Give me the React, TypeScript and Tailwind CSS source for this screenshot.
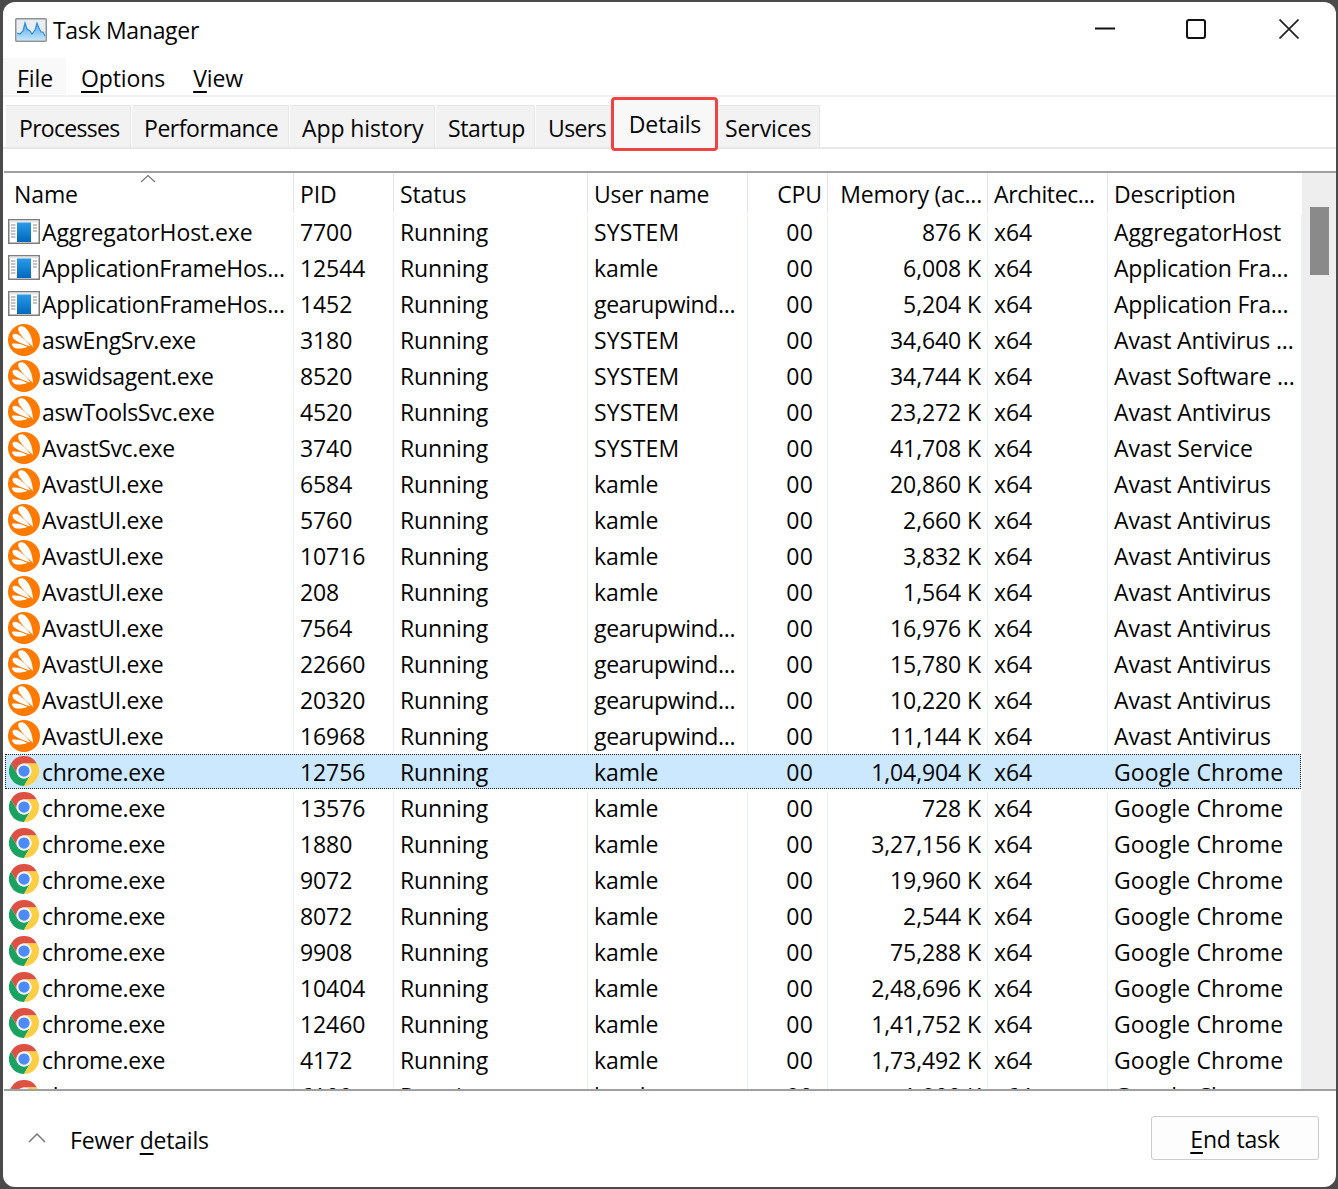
const rows: string[][] = [
["app","AggregatorHost.exe","7700","SYSTEM","876 K","AggregatorHost"],
["app","ApplicationFrameHos...","12544","kamle","6,008 K","Application Fra..."],
["app","ApplicationFrameHos...","1452","gearupwind...","5,204 K","Application Fra..."],
["avast","aswEngSrv.exe","3180","SYSTEM","34,640 K","Avast Antivirus ..."],
["avast","aswidsagent.exe","8520","SYSTEM","34,744 K","Avast Software ..."],
["avast","aswToolsSvc.exe","4520","SYSTEM","23,272 K","Avast Antivirus"],
["avast","AvastSvc.exe","3740","SYSTEM","41,708 K","Avast Service"],
["avast","AvastUI.exe","6584","kamle","20,860 K","Avast Antivirus"],
["avast","AvastUI.exe","5760","kamle","2,660 K","Avast Antivirus"],
["avast","AvastUI.exe","10716","kamle","3,832 K","Avast Antivirus"],
["avast","AvastUI.exe","208","kamle","1,564 K","Avast Antivirus"],
["avast","AvastUI.exe","7564","gearupwind...","16,976 K","Avast Antivirus"],
["avast","AvastUI.exe","22660","gearupwind...","15,780 K","Avast Antivirus"],
["avast","AvastUI.exe","20320","gearupwind...","10,220 K","Avast Antivirus"],
["avast","AvastUI.exe","16968","gearupwind...","11,144 K","Avast Antivirus"],
["chrome","chrome.exe","12756","kamle","1,04,904 K","Google Chrome"],
["chrome","chrome.exe","13576","kamle","728 K","Google Chrome"],
["chrome","chrome.exe","1880","kamle","3,27,156 K","Google Chrome"],
["chrome","chrome.exe","9072","kamle","19,960 K","Google Chrome"],
["chrome","chrome.exe","8072","kamle","2,544 K","Google Chrome"],
["chrome","chrome.exe","9908","kamle","75,288 K","Google Chrome"],
["chrome","chrome.exe","10404","kamle","2,48,696 K","Google Chrome"],
["chrome","chrome.exe","12460","kamle","1,41,752 K","Google Chrome"],
["chrome","chrome.exe","4172","kamle","1,73,492 K","Google Chrome"],
["chrome","chrome.exe","6100","kamle","1,900 K","Google Chrome"],
];

function AppIcon() {
  return (
    <svg width="32" height="25" viewBox="0 0 32 25" className="shrink-0 -mt-[2px]">
      <defs>
        <linearGradient id="appg" x1="0" y1="0" x2="0" y2="1">
          <stop offset="0" stopColor="#2a9ae8" />
          <stop offset="1" stopColor="#0068bd" />
        </linearGradient>
      </defs>
      <rect x="0.75" y="0.75" width="30.5" height="23.5" fill="#fff" stroke="#7d7d7d" strokeWidth="1.5" />
      <rect x="1.5" y="1.5" width="29" height="2" fill="#e6e6e6" />
      <rect x="9" y="3.5" width="14" height="19.5" fill="url(#appg)" />
      <path d="M3 6h4.5M3 9h4.5M3 12h4.5M3 15h4.5M3 18h4.5M25 6h4M25 9h4M25 12h4" stroke="#8a8a8a" strokeWidth="1.2" />
    </svg>
  );
}

function AvastIcon() {
  return (
    <svg width="32" height="34" viewBox="0 0 32 34" className="shrink-0">
      <circle cx="16" cy="17" r="16" fill="#ff7a00" />
      <path d="M11 3.8C13 2.8 15.5 3.2 17.5 5C21.5 8.5 24.5 15 25 24C21 20 15 15 11.5 10C10 7.8 9.8 5 11 3.8Z" fill="#fff" />
      <path d="M4.8 11.5C6 10.5 8 10.5 10 11.5C14.5 14 19.5 18.5 22.5 23.5C17 22 10.5 19.5 6.5 16.5C4.8 15 4 12.8 4.8 11.5Z" fill="#fff" />
      <path d="M4 20.8C8 20 14 21 19.5 24C15 25.5 10 26 7.5 25.3C5.5 24.6 3.6 22.2 4 20.8Z" fill="#fff" />
    </svg>
  );
}

function ChromeIcon() {
  return (
    <svg width="30" height="30" viewBox="0 0 48 48" className="shrink-0">
      <path d="M3.2 12A24 24 0 0 1 44.8 12H24A12 12 0 0 0 13.6 30z" fill="#dd5044" />
      <path d="M3.2 12L13.6 30A12 12 0 0 0 34.4 30L24 48A24 24 0 0 1 3.2 12z" fill="#1aa260" />
      <path d="M44.8 12H24A12 12 0 0 1 34.4 30L24 48A24 24 0 0 0 44.8 12z" fill="#ffce44" />
      <circle cx="24" cy="24" r="12" fill="#f3f3f3" />
      <circle cx="24" cy="24" r="9" fill="#4c8bf5" />
    </svg>
  );
}

function Icon({ kind }: { kind: string }) {
  if (kind === "app") return <AppIcon />;
  if (kind === "avast") return <AvastIcon />;
  return <span className="ml-px mr-px flex shrink-0 -mt-[2px]"><ChromeIcon /></span>;
}

function Tab({ label, w, pl, t }: { label: string; w: string; pl: string; t: string }) {
  return (
    <div className={`${w} ${pl} ${t} h-[42px] mr-px pt-[4px] bg-[#f2f2f2] border-t border-r border-[#e6e6e6] flex items-center whitespace-nowrap`}>
      {label}
    </div>
  );
}

function Head({ label, w, right, last, extra }: { label: string; w: string; right?: boolean; last?: boolean; extra?: string }) {
  return (
    <div className={`${w} ${extra ?? ""} h-10 shrink-0 flex items-center pt-[2px] pl-[6px] whitespace-nowrap ${right ? "justify-end pr-[5px]" : "pr-[6px]"} ${last ? "" : "border-r border-[#e5e5e5]"}`}>
      {label}
    </div>
  );
}

function Cell({ children, w, sel, cls }: { children: React.ReactNode; w: string; sel: boolean; cls?: string }) {
  return (
    <div className={`${w} ${cls ?? "px-[6px]"} h-full shrink-0 pb-[2px] flex items-center whitespace-nowrap border-r ${sel ? "border-transparent" : "border-[#e8f1fa]"}`}>
      {children}
    </div>
  );
}

function trackName(s: string) {
  if (s === "AggregatorHost.exe") return "";
  if (s.endsWith("...")) return "tracking-[-0.25px]";
  return "tracking-[-0.35px]";
}

function trackAny(s: string) {
  if (s === "Google Chrome") return "tracking-[0.12px]";
  if (s === "SYSTEM") return "tracking-[0.2px]";
  if (s === "Application Fra...") return "tracking-[-0.22px]";
  if (s === "Avast Antivirus ..." || s === "Avast Software ...") return "tracking-[-0.15px]";
  if (s.endsWith("...")) return "tracking-[-0.35px]";
  return "";
}

export default function App() {
  return (
    <div className="w-[1338px] h-[1189px] bg-[#4a4a4a] pt-[2px] pl-[3px] pr-[2px] pb-[2px] overflow-hidden text-[23px] text-[#050505] font-['Open_Sans',sans-serif] tracking-[-0.1px]">
      <div className="h-full bg-white rounded-[12px] flex flex-col overflow-hidden">
        <div className="h-[56px] flex items-center shrink-0">
          <svg width="32" height="24" viewBox="0 0 32 24" className="ml-[12px] shrink-0">
            <defs>
              <linearGradient id="tm" x1="0" y1="0" x2="0" y2="1">
                <stop offset="0" stopColor="#4ba6ea" />
                <stop offset="1" stopColor="#c4e4fb" />
              </linearGradient>
            </defs>
            <rect x="0.75" y="0.75" width="30.5" height="22.5" rx="1" fill="#e9edf0" stroke="#8c9298" strokeWidth="1.5" />
            <path d="M2 21V15L5 16L8 13L10 5L12 11L15 13L17 16L20 12L22 5L24 10L26 14L28 14L30 18V22H2Z" fill="url(#tm)" />
            <path d="M2 15L5 16L8 13L10 5L12 11L15 13L17 16L20 12L22 5L24 10L26 14L28 14L30 18" fill="none" stroke="#2f8fdc" strokeWidth="1.2" />
          </svg>
          <span className="ml-[6px] tracking-[-0.3px]">Task Manager</span>
          <div className="ml-auto flex items-center -mt-[2px]">
            <svg width="20" height="20" viewBox="0 0 20 20" className="mr-[71px]"><path d="M0 9.5H20" stroke="#111" strokeWidth="2" /></svg>
            <svg width="20" height="20" viewBox="0 0 20 20" className="mr-[73px]"><rect x="1" y="1" width="18" height="18" rx="2" fill="none" stroke="#111" strokeWidth="2" /></svg>
            <svg width="20" height="20" viewBox="0 0 20 20" className="mr-[37px]"><path d="M0.5 0.5L19.5 19.5M19.5 0.5L0.5 19.5" stroke="#222" strokeWidth="1.7" /></svg>
          </div>
        </div>
        <div className="h-[37px] flex items-center shrink-0 border-b-2 border-[#f1f1f1] box-content">
          <div className="w-[63px] h-full bg-[#f9f9f9] pl-[14px] pt-[3px] flex items-center"><span><u className="underline-offset-4">F</u>ile</span></div>
          <span className="ml-[15px] pt-[3px]"><u className="underline-offset-4">O</u>ptions</span>
          <span className="ml-[28px] pt-[3px]"><u className="underline-offset-4">V</u>iew</span>
        </div>
        <div className="h-[52px] shrink-0 flex items-end pl-[3px] border-b-2 border-[#e8e8e8]">
          <div className="flex items-end h-[42px]">
            <Tab label="Processes" w="w-[125px]" pl="pl-[13px]" t="tracking-[-0.7px]" />
            <Tab label="Performance" w="w-[157px]" pl="pl-[12px]" t="tracking-[-0.45px]" />
            <Tab label="App history" w="w-[145px]" pl="pl-[12px]" t="" />
            <Tab label="Startup" w="w-[99px]" pl="pl-[12px]" t="tracking-[-0.35px]" />
            <Tab label="Users" w="w-[75px]" pl="pl-[12px]" t="tracking-[-0.6px]" />
            <div className="w-[107px] h-[54px] -mb-[4px] -ml-px bg-[#f8f8f8] border-[3px] border-[#ef4444] rounded-[4px] flex items-center justify-center pl-[1px] relative z-10">Details</div>
            <Tab label="Services" w="w-[102px]" pl="pl-[7px]" t="" />
          </div>
        </div>
        <div className="h-[22px] shrink-0" />
        <div className="h-[920px] shrink-0 border-y-2 border-[#a0a0a0] flex overflow-hidden ml-px">
          <div className="w-[1298px] shrink-0 overflow-hidden">
            <div className="flex h-[40px]">
              <div className="w-[290px] h-10 shrink-0 flex items-center pt-[2px] pl-[10px] border-r border-[#e5e5e5] relative">
                Name
                <svg width="16" height="9" viewBox="0 0 16 9" className="absolute left-[136px] top-[1px]"><path d="M1 8L8 1.5L15 8" fill="none" stroke="#777" strokeWidth="1.2" /></svg>
              </div>
              <Head label="PID" w="w-[100px]" />
              <Head label="Status" w="w-[194px]" />
              <Head label="User name" w="w-[160px]" extra="tracking-[-0.2px]" />
              <Head label="CPU" w="w-[80px]" right />
              <Head label="Memory (ac..." w="w-[160px]" right extra="tracking-[-0.2px]" />
              <Head label="Architec..." w="w-[120px]" extra="tracking-[-0.4px]" />
              <Head label="Description" w="w-[194px]" last />
            </div>
            <div className="h-[2px]" />
            {rows.map((r, i) => {
              const sel = i === 15;
              return (
                <div key={i} className="relative h-[36px]">
                  {sel && <div className="absolute -top-px left-[1px] right-[1px] h-[35px] bg-[#cce8ff] border border-dotted border-[#222]" />}
                  <div className="relative flex h-full">
                    <div className={`w-[290px] h-full shrink-0 pb-[2px] flex items-center pl-[4px] gap-[2px] whitespace-nowrap border-r ${sel ? "border-transparent" : "border-[#e8f1fa]"}`}>
                      <Icon kind={r[0]} />
                      <span className={trackName(r[1])}>{r[1]}</span>
                    </div>
                    <Cell w="w-[100px]" sel={sel}>{r[2]}</Cell>
                    <Cell w="w-[194px]" sel={sel}>Running</Cell>
                    <Cell w="w-[160px]" sel={sel}><span className={trackAny(r[3])}>{r[3]}</span></Cell>
                    <Cell w="w-[80px]" sel={sel} cls="justify-end pr-[14px]"><span className="tracking-[0.2px]">00</span></Cell>
                    <Cell w="w-[160px]" sel={sel} cls="justify-end pr-[6px]">{r[4]}</Cell>
                    <Cell w="w-[120px]" sel={sel}>x64</Cell>
                    <Cell w="w-[194px]" sel={sel}><span className={trackAny(r[5])}>{r[5]}</span></Cell>
                  </div>
                </div>
              );
            })}
          </div>
          <div className="flex-1 bg-[#eeeeee] pt-[34px] pl-[8px]">
            <div className="w-[19px] h-[68px] bg-[#8a8a8a]" />
          </div>
        </div>
        <div className="flex-1 flex items-center">
          <svg width="18" height="11" viewBox="0 0 18 11" className="ml-[25px] shrink-0 -mt-[4px]"><path d="M1 10L9 2L17 10" fill="none" stroke="#777" strokeWidth="1.5" /></svg>
          <span className="ml-[24px] pt-[3px] tracking-[-0.2px]">Fewer <u className="underline-offset-4">d</u>etails</span>
          <button className="ml-auto mr-[17px] w-[168px] h-[44px] -mt-[2px] pt-[3px] bg-[#fdfdfd] border border-[#cccccc] rounded-[3px] flex items-center justify-center"><span className="tracking-[-0.2px]"><u className="underline-offset-4">E</u>nd task</span></button>
        </div>
      </div>
    </div>
  );
}
